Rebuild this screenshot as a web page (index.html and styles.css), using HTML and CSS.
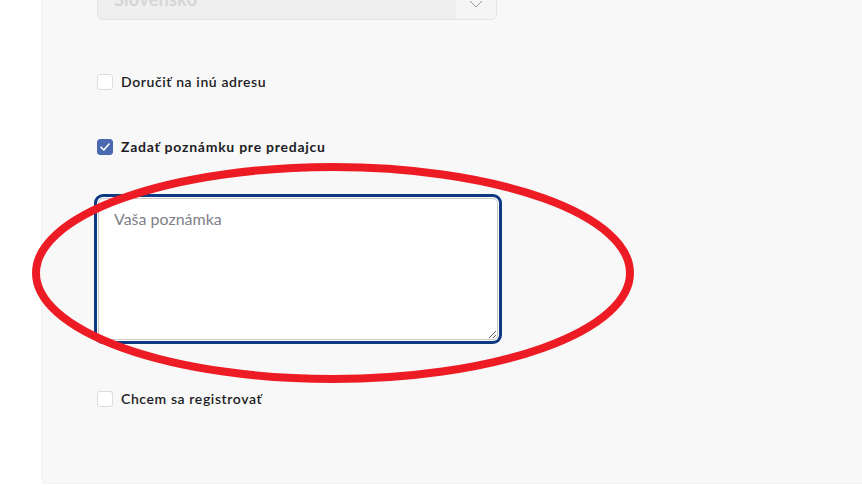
FILE: index.html
```html
<!DOCTYPE html>
<html lang="sk">
<head>
    <meta charset="UTF-8">
    <meta name="viewport" content="width=device-width, initial-scale=1.0">
    <title>Pokladňa</title>
    <link rel="stylesheet" href="styles.css">
</head>
<body>
    <div class="page">
        <aside class="side"></aside>

        <main class="panel">
            <div class="select">
                <span class="select-value">Slovensko</span>
                <span class="select-arrow">
                    <svg width="14" height="8" viewBox="0 0 14 8"><path d="M1 1 L7 7 L13 1" fill="none" stroke="#9a9a9a" stroke-width="1"/></svg>
                </span>
            </div>

            <label class="check check-first">
                <span class="box"></span>
                <span class="check-text">Doručiť na inú adresu</span>
            </label>

            <label class="check check-note">
                <span class="box box-on">
                    <svg width="12" height="10" viewBox="0 0 12 10"><path d="M2 5.2 L4.8 8 L10 2" fill="none" stroke="#fff" stroke-width="1.6" stroke-linecap="round" stroke-linejoin="round"/></svg>
                </span>
                <span class="check-text strong">Zadať poznámku pre predajcu</span>
            </label>

            <textarea class="note" placeholder="Vaša poznámka"></textarea>

            <label class="check check-reg">
                <span class="box"></span>
                <span class="check-text">Chcem sa registrovať</span>
            </label>
        </main>
    </div>

    <!-- červené zvýraznenie -->
    <svg class="mark" width="862" height="485" viewBox="0 0 862 485">
        <ellipse cx="333" cy="273" rx="297" ry="106" fill="none" stroke="#ed1c24" stroke-width="8"/>
    </svg>
</body>
</html>
```

FILE: styles.css
```css
body {
    margin: 0;
    padding: 0;
    background-color: #ffffff;
    font-family: Lato, "Open Sans", Arial, sans-serif;
    color: #1c1c24;
    overflow: hidden;
}
.page {
    display: flex;
    height: 485px;
}
.side {
    width: 41px;
    flex-shrink: 0;
}
.panel {
    flex: 1;
    height: 483px;
    background-color: #f8f8f8;
    border-left: 1px solid #f3f3f3;
    border-bottom: 1px solid #f3f3f3;
    border-bottom-left-radius: 6px;
    padding-left: 55px;
    display: flex;
    flex-direction: column;
    align-items: flex-start;
}
.select {
    margin-top: -20px;
    width: 398px;
    height: 38px;
    border: 1px solid #e3e3e3;
    border-radius: 6px;
    background-color: #efefef;
    display: flex;
    overflow: hidden;
}
.select-value {
    flex: 1;
    padding-left: 16px;
    line-height: 36px;
    font-size: 18px;
    font-weight: 700;
    letter-spacing: 0.3px;
    color: #d6d6d6;
}
.select-value,
.select-arrow {
    user-select: none;
}
.select-arrow {
    width: 40px;
    background-color: #f5f5f5;
    display: flex;
    justify-content: center;
    padding-top: 19px;
    align-items: flex-start;
}
.check {
    display: flex;
    align-items: center;
    gap: 8px;
    cursor: pointer;
}
.check-first {
    margin-top: 54px;
}
.check-note {
    margin-top: 49px;
}
.check-reg {
    margin-top: 51px;
}
.box {
    width: 14px;
    height: 14px;
    border: 1px solid #dcdcdc;
    border-radius: 3px;
    background-color: #ffffff;
    display: flex;
    align-items: center;
    justify-content: center;
}
.box-on {
    background-color: #4b69b0;
    border-color: #4b69b0;
}
.check-text {
    font-size: 14px;
    font-weight: 600;
    letter-spacing: 0.6px;
    line-height: 16px;
}
.check-text.strong {
    font-weight: 700;
    letter-spacing: 0.75px;
}
.note {
    margin-top: 43px;
    margin-left: 1px;
    width: 400px;
    height: 142px;
    box-sizing: border-box;
    border: 1px solid #c9c9c9;
    border-radius: 5px;
    padding: 10px 15px;
    font-family: Lato, "Open Sans", Arial, sans-serif;
    font-size: 16px;
    background-color: #ffffff;
    outline: none;
    box-shadow: 0 0 0 1px #ffffff, 0 0 0 4px #0d3a82;
}
.note::placeholder {
    color: #80808a;
}
.mark {
    position: absolute;
    left: 0;
    top: 0;
    pointer-events: none;
}
```
